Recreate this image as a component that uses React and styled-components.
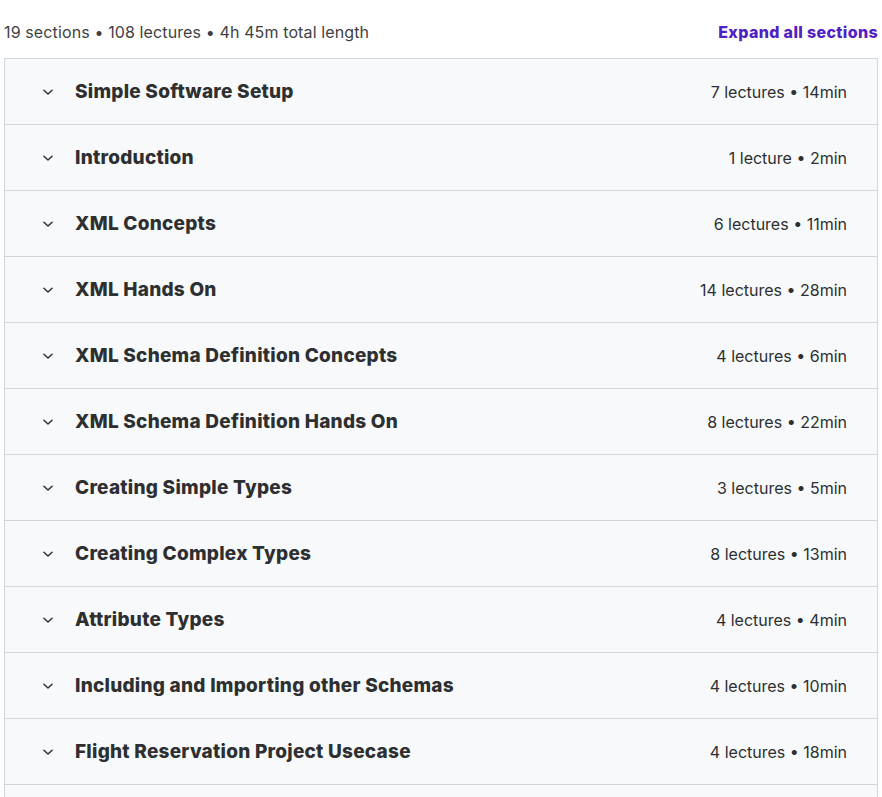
import React from 'react'
import styled, { createGlobalStyle } from 'styled-components'

const GlobalStyle = createGlobalStyle`
  body {
    margin: 0;
    background: #fff;
    font-family: Inter, "Liberation Sans", sans-serif;
    color: #2d2f31;
  }
`

const sections = [
  { title: 'Simple Software Setup', meta: '7 lectures • 14min' },
  { title: 'Introduction', meta: '1 lecture • 2min' },
  { title: 'XML Concepts', meta: '6 lectures • 11min' },
  { title: 'XML Hands On', meta: '14 lectures • 28min' },
  { title: 'XML Schema Definition Concepts', meta: '4 lectures • 6min' },
  { title: 'XML Schema Definition Hands On', meta: '8 lectures • 22min' },
  { title: 'Creating Simple Types', meta: '3 lectures • 5min' },
  { title: 'Creating Complex Types', meta: '8 lectures • 13min' },
  { title: 'Attribute Types', meta: '4 lectures • 4min' },
  { title: 'Including and Importing other Schemas', meta: '4 lectures • 10min' },
  { title: 'Flight Reservation Project Usecase', meta: '4 lectures • 18min' },
  { title: 'Generating Java Code from XSD', meta: '3 lectures • 8min' },
]

function Chevron() {
  return (
    <svg width="14" height="14" viewBox="0 0 24 24" fill="none" stroke="#2d2f31" strokeWidth="2.6" strokeLinecap="round" strokeLinejoin="round">
      <path d="M5 9l7 6.5L19 9" />
    </svg>
  )
}

export default function App() {
  return (
    <>
      <GlobalStyle />
      <Page>
        <Header>
          <Summary>19 sections • 108 lectures • 4h 45m total length</Summary>
          <ExpandButton>Expand all sections</ExpandButton>
        </Header>
        <Curriculum>
          {sections.map((s) => (
            <SectionRow key={s.title}>
              <ChevronWrap><Chevron /></ChevronWrap>
              <SectionTitle>{s.title}</SectionTitle>
              <SectionMeta>{s.meta}</SectionMeta>
            </SectionRow>
          ))}
        </Curriculum>
      </Page>
    </>
  )
}

const Page = styled.div`
  padding: 0 4px;
  height: 797px;
  overflow: hidden;
`

const Header = styled.div`
  display: flex;
  align-items: center;
  justify-content: space-between;
  height: 24px;
  padding-top: 20px;
  margin-bottom: 14px;
`

const Summary = styled.span`
  font-size: 16px;
  color: #3e4143;
  letter-spacing: 0.12px;
`

const ExpandButton = styled.button`
  border: none;
  background: none;
  padding: 0;
  font-family: inherit;
  font-size: 16px;
  font-weight: 800;
  letter-spacing: 0.35px;
  color: #5022c3;
  cursor: pointer;
`

const Curriculum = styled.div`
  border: 1px solid #d1d7dc;
  border-bottom: none;
`

const SectionRow = styled.div`
  display: flex;
  align-items: center;
  height: 65px;
  padding: 0 30px 0 36px;
  background: #f7f9fa;
  border-bottom: 1px solid #d1d7dc;
`

const ChevronWrap = styled.span`
  display: flex;
  align-items: center;
  justify-content: center;
  width: 14px;
  margin-right: 20px;
`

const SectionTitle = styled.span`
  flex: 1;
  font-size: 19px;
  font-weight: 800;
  letter-spacing: 0.25px;
  line-height: 1;
  padding-bottom: 1px;
`

const SectionMeta = styled.span`
  font-size: 16px;
  color: #2d2f31;
`
